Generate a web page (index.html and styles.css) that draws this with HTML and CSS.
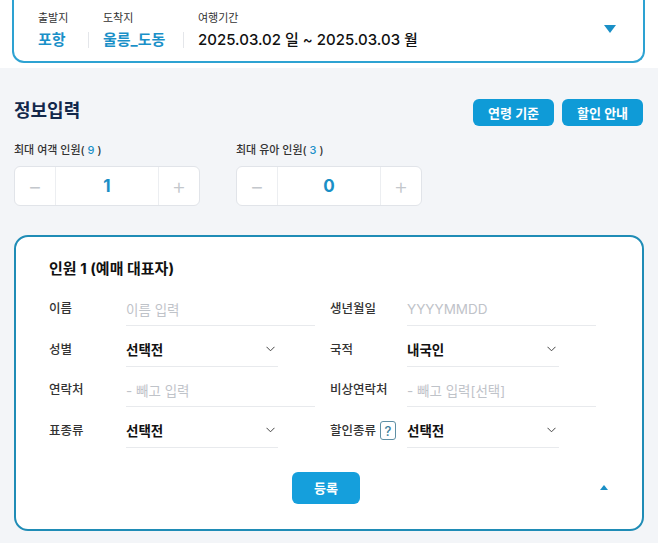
FILE: index.html
```html
<!DOCTYPE html>
<html lang="ko">
<head>
    <meta charset="UTF-8">
    <meta name="viewport" content="width=device-width, initial-scale=1.0">
    <title>정보입력</title>
    <link rel="stylesheet" href="styles.css">
</head>
<body>
    <div class="top">
        <div class="route-card">
            <div class="route">
                <span class="route-label">출발지</span>
                <span></span>
                <span class="route-label">도착지</span>
                <span></span>
                <span class="route-label">여행기간</span>
                <span class="route-value">포항</span>
                <span class="route-divider"></span>
                <span class="route-value">울릉_도동</span>
                <span class="route-divider"></span>
                <span class="route-date">2025.03.02 일 ~ 2025.03.03 월</span>
            </div>
            <span class="arrow-down"></span>
        </div>
    </div>

    <div class="section">
        <div class="section-head">
            <h2>정보입력</h2>
            <div class="head-buttons">
                <button class="btn-small">연령 기준</button>
                <button class="btn-small">할인 안내</button>
            </div>
        </div>

        <div class="counters">
            <div class="counter-group">
                <div class="counter-label">최대 여객 인원( <em>9</em> )</div>
                <div class="counter">
                    <span class="counter-btn">&minus;</span>
                    <span class="counter-value">1</span>
                    <span class="counter-btn">+</span>
                </div>
            </div>
            <div class="counter-group">
                <div class="counter-label">최대 유아 인원( <em>3</em> )</div>
                <div class="counter">
                    <span class="counter-btn">&minus;</span>
                    <span class="counter-value">0</span>
                    <span class="counter-btn">+</span>
                </div>
            </div>
        </div>

        <div class="person-card">
            <h3>인원 1 (예매 대표자)</h3>
            <div class="form-grid">
                <div class="field">
                    <span class="field-label">이름</span>
                    <span class="control"><span class="placeholder">이름 입력</span></span>
                </div>
                <div class="field">
                    <span class="field-label">생년월일</span>
                    <span class="control"><span class="placeholder">YYYYMMDD</span></span>
                </div>
                <div class="field">
                    <span class="field-label">성별</span>
                    <span class="control select"><span class="selected">선택전</span>
                        <svg class="chevron" width="9" height="6" viewBox="0 0 9 6"><polyline points="0.5,0.8 4.5,4.8 8.5,0.8" fill="none" stroke="#444" stroke-width="1"/></svg>
                    </span>
                </div>
                <div class="field">
                    <span class="field-label">국적</span>
                    <span class="control select"><span class="selected">내국인</span>
                        <svg class="chevron" width="9" height="6" viewBox="0 0 9 6"><polyline points="0.5,0.8 4.5,4.8 8.5,0.8" fill="none" stroke="#444" stroke-width="1"/></svg>
                    </span>
                </div>
                <div class="field">
                    <span class="field-label">연락처</span>
                    <span class="control"><span class="placeholder">- 빼고 입력</span></span>
                </div>
                <div class="field">
                    <span class="field-label">비상연락처</span>
                    <span class="control"><span class="placeholder">- 빼고 입력[선택]</span></span>
                </div>
                <div class="field">
                    <span class="field-label">표종류</span>
                    <span class="control select"><span class="selected">선택전</span>
                        <svg class="chevron" width="9" height="6" viewBox="0 0 9 6"><polyline points="0.5,0.8 4.5,4.8 8.5,0.8" fill="none" stroke="#444" stroke-width="1"/></svg>
                    </span>
                </div>
                <div class="field">
                    <span class="field-label">할인종류<span class="help">?</span></span>
                    <span class="control select"><span class="selected">선택전</span>
                        <svg class="chevron" width="9" height="6" viewBox="0 0 9 6"><polyline points="0.5,0.8 4.5,4.8 8.5,0.8" fill="none" stroke="#444" stroke-width="1"/></svg>
                    </span>
                </div>
            </div>
            <div class="card-foot">
                <button class="btn-submit">등록</button>
                <span class="arrow-up"></span>
            </div>
        </div>
    </div>
</body>
</html>
```

FILE: styles.css
```css
body {
    margin: 0;
    background: #f3f5f8;
    font-family: Inter, "Noto Sans CJK KR", sans-serif;
    color: #222;
}
.top {
    background: #fff;
    padding: 0 13px 5px 12px;
}
.route-card {
    display: flex;
    align-items: center;
    border: 2px solid #2da2d2;
    border-top: none;
    border-radius: 0 0 12px 12px;
    padding: 11px 27px 10px 24px;
}
.route {
    flex: 1;
    display: grid;
    grid-template-columns: 36px 1px 66px 1px 1fr;
    column-gap: 14px;
    row-gap: 4px;
    align-items: center;
}
.route-label {
    font-size: 11px;
    line-height: 14px;
    color: #333;
}
.route-value {
    font-size: 15px;
    line-height: 22px;
    font-weight: 700;
    color: #1a90c8;
}
.route-divider {
    height: 16px;
    background: #e4e6ea;
}
.route-date {
    font-size: 15px;
    line-height: 22px;
    font-weight: 500;
    color: #111;
}
.arrow-down {
    width: 0;
    height: 0;
    border-left: 6.5px solid transparent;
    border-right: 6.5px solid transparent;
    border-top: 8px solid #1a8fc6;
    margin-bottom: 4px;
}
.section {
    padding: 32px 15px 0 14px;
}
.section-head {
    display: flex;
    justify-content: space-between;
    align-items: flex-start;
}
h2 {
    margin: 0;
    font-size: 18px;
    line-height: 22px;
    font-weight: 700;
    color: #13284b;
}
.head-buttons {
    display: flex;
    gap: 8px;
    margin-top: -1px;
}
.btn-small {
    width: 81px;
    height: 27px;
    border: none;
    border-radius: 6px;
    background: #0f9bd7;
    color: #fff;
    font-family: inherit;
    font-size: 13px;
    font-weight: 600;
    padding: 0;
}
.counters {
    display: flex;
    gap: 36px;
    margin-top: 16px;
}
.counter-label {
    font-size: 11px;
    line-height: 16px;
    font-weight: 500;
    color: #333;
    margin-bottom: 8px;
}
.counter-label em {
    font-style: normal;
    color: #1a90c8;
}
.counter {
    display: flex;
    width: 184px;
    height: 38px;
    border: 1px solid #e1e4e9;
    border-radius: 6px;
    background: #fff;
}
.counter-btn {
    width: 40px;
    display: flex;
    align-items: center;
    justify-content: center;
    font-size: 22px;
    font-weight: 300;
    color: #c3c7cc;
}
.counter-btn:first-child {
    border-right: 1px solid #eceef1;
}
.counter-btn:last-child {
    border-left: 1px solid #eceef1;
}
.counter-value {
    flex: 1;
    display: flex;
    align-items: center;
    justify-content: center;
    font-size: 17px;
    font-weight: 700;
    color: #1a8fc6;
}
.person-card {
    margin-top: 29px;
    margin-right: -1px;
    background: #fff;
    border: 2px solid #1f8cb6;
    border-radius: 14px;
    padding: 21px 47px 25px 33px;
}
h3 {
    margin: 0 0 13px;
    font-size: 15px;
    line-height: 22px;
    font-weight: 700;
    color: #111;
}
.form-grid {
    display: grid;
    grid-template-columns: 266px 266px;
    column-gap: 15px;
    row-gap: 7.5px;
}
.field {
    display: flex;
    align-items: flex-start;
}
.field-label {
    width: 77px;
    display: flex;
    align-items: center;
    font-size: 12.5px;
    line-height: 20px;
    font-weight: 500;
    padding-top: 6px;
    color: #333;
}
.control {
    width: 189px;
    height: 33px;
    box-sizing: border-box;
    display: flex;
    align-items: center;
    padding-bottom: 1px;
    border-bottom: 1px solid #e8eaed;
    font-size: 13.5px;
}
.control.select {
    width: 152px;
    justify-content: space-between;
    padding-right: 3px;
}
.placeholder {
    color: #bfc3c9;
}
.selected {
    font-weight: 700;
    color: #111;
}
.help {
    display: inline-flex;
    align-items: center;
    justify-content: center;
    width: 14px;
    height: 17px;
    margin-left: 4px;
    border: 1px solid #5f8fa4;
    border-radius: 3px;
    font-size: 13px;
    color: #3d7f9c;
}
.card-foot {
    display: grid;
    grid-template-columns: 1fr 68px 1fr;
    align-items: center;
    margin: 24px -13px 0 -5px;
}
.btn-submit {
    grid-column: 2;
    height: 32px;
    border: none;
    border-radius: 6px;
    background: #159fdc;
    color: #fff;
    font-family: inherit;
    font-size: 13px;
    font-weight: 600;
    padding: 0;
}
.arrow-up {
    justify-self: end;
    width: 0;
    height: 0;
    border-left: 4px solid transparent;
    border-right: 4px solid transparent;
    border-bottom: 5px solid #1a8fc6;
}
```
